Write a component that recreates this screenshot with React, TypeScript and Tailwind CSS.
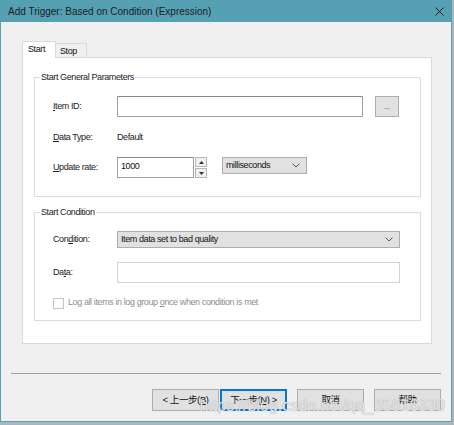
import React from 'react';

const U: React.FC<{ children: React.ReactNode }> = ({ children }) => (
    <span className="underline underline-offset-1">{children}</span>
);

const Chevron: React.FC = () => (
    <svg width="8" height="5" viewBox="0 0 8 5" className="shrink-0">
        <path d="M0.5 0.5 L4 4 L7.5 0.5" fill="none" stroke="#555" strokeWidth="1" />
    </svg>
);

const Group: React.FC<{ title: string; className?: string; children: React.ReactNode }> = ({ title, className, children }) => (
    <div className={`border border-[#dcdcdc] pl-[18px] ${className ?? ''}`}>
        <div className="-mt-[7px] -ml-[13px] px-[1px] bg-white w-fit leading-[13px] text-[#1a1a1a]">{title}</div>
        {children}
    </div>
);

const DlgButton: React.FC<{ children: React.ReactNode; focused?: boolean; className?: string }> = ({ children, focused, className }) => (
    <div
        className={`w-[67px] h-[22px] flex items-center justify-center bg-[#e1e1e1] text-[9.5px] text-[#111] ${
            focused ? 'border-2 border-[#0078d7]' : 'border border-[#adadad]'
        } ${className ?? ''}`}
        style={{ fontFamily: '"Liberation Sans", "Noto Sans CJK SC", sans-serif' }}
    >
        {children}
    </div>
);

export default function App() {
    return (
        <div
            className="w-[454px] h-[425px] bg-[#a9b7bc] overflow-hidden text-[9px] tracking-[-0.4px]"
            style={{ fontFamily: '"Liberation Sans", Arial, sans-serif' }}
        >
            <div className="relative w-[452px] h-[422px] flex flex-col border-x border-b border-[#5a9fb3]">
                {/* Title bar */}
                <div className="h-[22px] shrink-0 bg-[#56a0b4] flex items-center justify-between pl-[7px] pr-[7px]">
                    <span className="text-[10px] tracking-normal text-[#1b1b1b]">Add Trigger: Based on Condition (Expression)</span>
                    <svg width="9" height="9" viewBox="0 0 9 9">
                        <path d="M0.5 0.5 L8.5 8.5 M8.5 0.5 L0.5 8.5" stroke="#1b1b1b" strokeWidth="1" />
                    </svg>
                </div>

                {/* Body */}
                <div className="flex-1 bg-[#f0f0f0] flex flex-col pt-[19px]">
                    {/* Tabs */}
                    <div className="flex items-end h-[16px] pl-[21px]">
                        <div className="relative z-10 -mb-[1px] h-[17px] w-[34px] bg-white border border-b-0 border-[#d9d9d9] pl-[5px] leading-[15px] text-[#111]">
                            Start
                        </div>
                        <div className="h-[14px] w-[31px] bg-[#f0f0f0] border border-b-0 border-l-0 border-[#d9d9d9] pl-[4px] leading-[14px] text-[#111]">
                            Stop
                        </div>
                    </div>

                    {/* Tab panel */}
                    <div className="ml-[21px] w-[410px] h-[287px] bg-white border border-[#d9d9d9] pt-[19px] pl-[11px]">
                        <Group title="Start General Parameters" className="w-[387px] pb-[18px]">
                            <div className="mt-[12px] h-[21px] flex items-center">
                                <div className="w-[64px] text-[#1a1a1a]"><U>I</U>tem ID:</div>
                                <div className="w-[246px] h-[21px] bg-white border border-[#a0a0a0] border-t-[#8a8a8a]" />
                                <div className="ml-[12px] w-[24px] h-[21px] bg-[#e1e1e1] border border-[#adadad] flex items-center justify-center text-[8px] text-[#444] leading-none">
                                    ...
                                </div>
                            </div>
                            <div className="mt-[10px] h-[21px] flex items-center text-[#1a1a1a]">
                                <div className="w-[64px]"><U>D</U>ata Type:</div>
                                <div>Default</div>
                            </div>
                            <div className="mt-[9px] h-[21px] flex items-start">
                                <div className="w-[64px] h-[21px] flex items-center text-[#1a1a1a]"><U>U</U>pdate rate:</div>
                                <div className="w-[77px] h-[21px] bg-white border border-[#a0a0a0] border-t-[#8a8a8a] pl-[3px] pt-[2px] leading-[12px] text-[#111]">
                                    1000
                                </div>
                                <div className="ml-[1px] w-[12px] h-[21px] flex flex-col gap-[1px]">
                                    <div className="flex-1 bg-[#f0f0f0] border border-[#b8b8b8] flex items-center justify-center">
                                        <svg width="5" height="3" viewBox="0 0 5 3"><path d="M2.5 0 L5 3 L0 3 Z" fill="#333" /></svg>
                                    </div>
                                    <div className="flex-1 bg-[#f0f0f0] border border-[#b8b8b8] flex items-center justify-center">
                                        <svg width="5" height="3" viewBox="0 0 5 3"><path d="M0 0 L5 0 L2.5 3 Z" fill="#333" /></svg>
                                    </div>
                                </div>
                                <div className="ml-[15px] w-[85px] h-[17px] bg-[#e1e1e1] border border-[#adadad] flex items-center justify-between pl-[3px] pr-[6px] text-[#111]">
                                    <span>milliseconds</span>
                                    <Chevron />
                                </div>
                            </div>
                        </Group>

                        <Group title="Start Condition" className="mt-[15px] w-[387px] pb-[10px]">
                            <div className="mt-[12px] h-[17px] flex items-center">
                                <div className="w-[64px] text-[#1a1a1a]">Con<U>d</U>ition:</div>
                                <div className="w-[283px] h-[17px] bg-[#e1e1e1] border border-[#adadad] flex items-center justify-between pl-[3px] pr-[6px] text-[#111]">
                                    <span>Item data set to bad quality</span>
                                    <Chevron />
                                </div>
                            </div>
                            <div className="mt-[14px] h-[21px] flex items-center">
                                <div className="w-[64px] text-[#1a1a1a]">Da<U>t</U>a:</div>
                                <div className="w-[283px] h-[21px] bg-white border border-[#d4d4d4]" />
                            </div>
                            <div className="mt-[13px] h-[14px] flex items-center text-[#8d8d8d]">
                                <div className="w-[11px] h-[11px] border border-[#c4c4c4] bg-white" />
                                <span className="ml-[4px]">Log all items in log group <U>o</U>nce when condition is met</span>
                            </div>
                        </Group>
                    </div>

                    {/* Separator */}
                    <div className="mt-[29px] mx-[10px] h-px bg-[#a0a0a0]" />

                    {/* Buttons */}
                    <div className="mt-[15px] flex justify-end pr-[10px]">
                        <DlgButton>&lt; 上一步(<U>B</U>)</DlgButton>
                        <DlgButton focused className="ml-[1px]">下一步(<U>N</U>) &gt;</DlgButton>
                        <DlgButton className="ml-[10px]">取消</DlgButton>
                        <DlgButton className="ml-[10px]">帮助</DlgButton>
                    </div>
                </div>

                {/* Watermark */}
                <div className="absolute right-[6px] bottom-[7px] text-[16px] tracking-normal leading-none text-white/75 [text-shadow:0_0_1px_#8a8a8a] pointer-events-none">
                    https://blog.csdn.net/qq_35616330
                </div>
            </div>
        </div>
    );
}
